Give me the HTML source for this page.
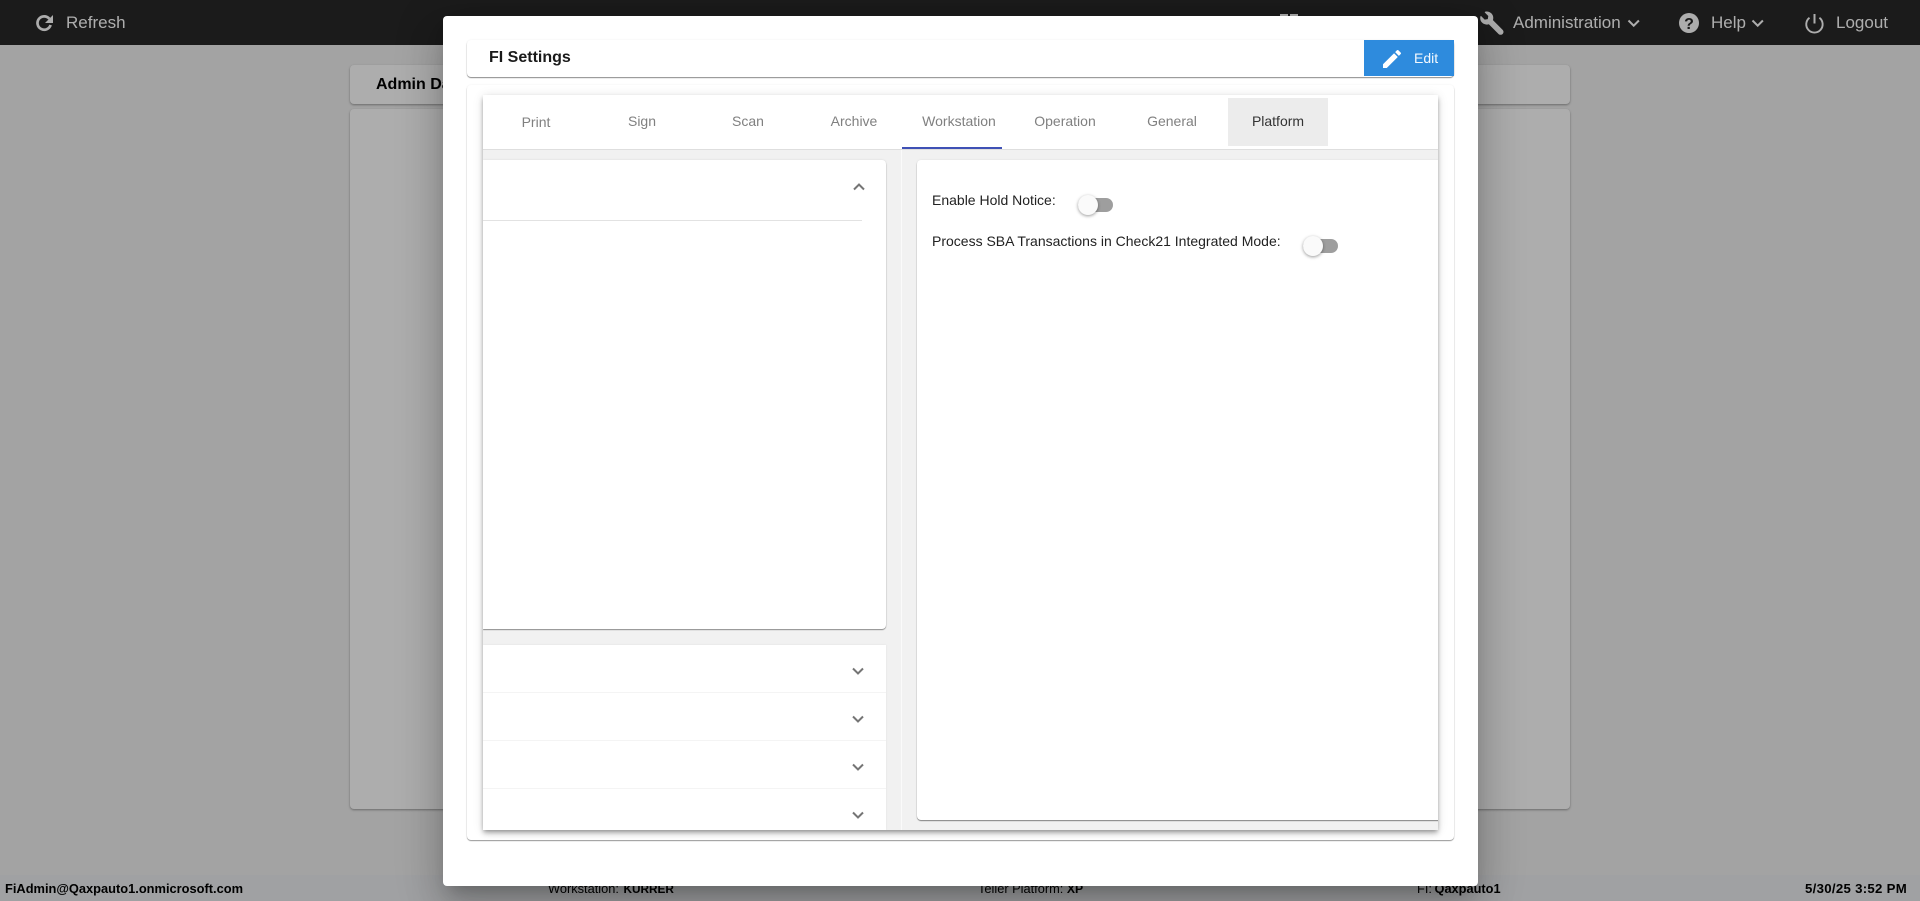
<!DOCTYPE html>
<html lang="en">
<head>
<meta charset="utf-8">
<title>FI Settings</title>
<style>
html,body{margin:0;padding:0;width:1920px;height:901px;overflow:hidden;background:#f0f0f0;font-family:"Liberation Sans",sans-serif}
div,span,svg{position:absolute;box-sizing:border-box;white-space:nowrap}
b,i{position:static}
.hdr{left:0;top:0;width:1920px;height:45px;background:#292929}
.nav{top:12px;height:21px;line-height:21px;font-size:17px;color:#fff}
.bg1{left:350px;top:65px;width:1220px;height:39px;background:#fff;border-radius:4px;box-shadow:0 1px 2px rgba(0,0,0,.35)}
.bg1 b{position:absolute;left:26px;top:11px;font-size:16px;line-height:18px;color:#000}
.bg2{left:350px;top:109px;width:1220px;height:700px;background:#fff;border-radius:4px;box-shadow:0 1px 2px rgba(0,0,0,.35)}
.ftr{left:0;top:875px;width:1920px;height:26px;background:#eceef0}
.ft{top:881px;height:16px;line-height:16px;font-size:12.8px;color:#000}
.ov{left:0;top:0;width:1920px;height:901px;background:rgba(0,0,0,.32)}
.modal{left:443px;top:16px;width:1035px;height:870px;background:#fff;border-radius:4px;box-shadow:0 11px 15px -7px rgba(0,0,0,.2),0 24px 38px 3px rgba(0,0,0,.14),0 9px 46px 8px rgba(0,0,0,.12)}
.title{left:24px;top:24px;width:987px;height:37px;background:#fff;border-radius:4px;box-shadow:0 1px 1px rgba(0,0,0,.45),0 0 2px rgba(0,0,0,.06)}
.title b{position:absolute;left:22px;top:8px;font-size:16px;line-height:19px;color:#1a1a1a}
.edit{left:897px;top:0;width:90px;height:36px;background:#2e8bdd}
.edit span{left:50px;top:10px;font-size:14px;line-height:16px;color:#f4f9fe}
.content{left:24px;top:69px;width:987px;height:755px;background:#fff;border-radius:4px;box-shadow:0 1px 1px rgba(0,0,0,.4),0 0 2px rgba(0,0,0,.06)}
.tabs{left:16px;top:10px;width:955px;height:735px;background:#f1f1f1;overflow:hidden;border-radius:2px 2px 0 0}
.tabsh{left:16px;top:10px;width:955px;height:735px;box-shadow:0 2px 4px -1px rgba(0,0,0,.3),0 4px 5px 0 rgba(0,0,0,.16),0 1px 10px 0 rgba(0,0,0,.12)}
.bar{left:0;top:0;width:955px;height:55px;background:#fff;border-bottom:1px solid #dedede}
.tab{top:18px;width:106px;text-align:center;font-size:14px;line-height:16px;color:#808080}
.left{left:0;top:65px;width:403px;height:469px;background:#fff;border-radius:0 4px 4px 0;box-shadow:0 1px 1px rgba(0,0,0,.4),0 0 2px rgba(0,0,0,.1)}
.acc{left:0;top:550px;width:403px;height:185px;background:#fff;box-shadow:0 0 2px rgba(0,0,0,.08)}
.sep{left:0;width:403px;height:1px;background:#f4f4f4}
.vline{left:418px;top:55px;width:1px;height:680px;background:#fafafa}
.right{left:434px;top:65px;width:530px;height:660px;background:#fff;border-radius:4px;box-shadow:0 1px 1px rgba(0,0,0,.45),0 0 2px rgba(0,0,0,.08)}
.lab{left:15px;font-size:14px;line-height:16px;color:#222}
.track{width:35px;height:14px;background:#9e9e9e;border-radius:7px}
.thumb{width:20px;height:20px;background:#fafafa;border-radius:50%;box-shadow:0 1px 3px rgba(0,0,0,.4)}
</style>
</head>
<body>
<div class="hdr"></div>
<div class="nav" style="left:66px">Refresh</div>
<div class="nav" style="left:1513px">Administration</div>
<div class="nav" style="left:1711px">Help</div>
<div class="nav" style="left:1836px">Logout</div>
<svg style="left:0;top:0" width="1920" height="45" viewBox="0 0 1920 45" fill="none">
  <path d="M49.3 18.7A6.7 6.7 0 1 0 50.6 25" stroke="#fff" stroke-width="2.7"/>
  <path d="M53 15v8h-8z" fill="#fff"/>
  <rect x="1280" y="14" width="8" height="3" fill="#fff"/>
  <rect x="1290" y="14" width="8" height="3" fill="#fff"/>
  <g transform="translate(1503.5 11.5) scale(-0.0455 0.0455)">
    <path fill="#fff" d="M507.73 109.1c-2.24-9.03-13.54-12.09-20.12-5.51l-74.36 74.36-67.88-11.31-11.31-67.88 74.36-74.36c6.62-6.62 3.43-17.9-5.66-20.16-47.38-11.74-99.55.91-136.58 37.93-39.64 39.64-50.55 97.1-34.05 147.2L18.74 402.76c-24.99 24.99-24.99 65.51 0 90.5 24.99 24.99 65.51 24.99 90.5 0l213.21-213.21c50.12 16.71 107.47 5.68 147.37-34.22 37.07-37.07 49.7-89.32 37.91-136.73z"/>
  </g>
  <path d="M1628.5 20.5l5.2 5.2 5.2-5.2" stroke="#fff" stroke-width="2"/>
  <circle cx="1689" cy="23" r="10" fill="#fff"/>
  <text x="1689" y="29" text-anchor="middle" font-family="Liberation Sans" font-weight="700" font-size="16" fill="#292929">?</text>
  <path d="M1752.5 20.5l5.2 5.2 5.2-5.2" stroke="#fff" stroke-width="2"/>
  <path d="M1809.5 17.8a8.2 8.2 0 1 0 9.9 0" stroke="#fff" stroke-width="1.9"/>
  <path d="M1814.5 14v9.5" stroke="#fff" stroke-width="2"/>
</svg>

<div class="bg1"><b>Admin Dashboard</b></div>
<div class="bg2"></div>

<div class="ftr"></div>
<div class="ft" style="left:5px;font-size:12.85px"><b>FiAdmin@Qaxpauto1.onmicrosoft.com</b></div>
<div class="ft" style="left:548px">Workstation: <b style="font-size:11.8px;margin-left:1px">KURRER</b></div>
<div class="ft" style="left:978px">Teller Platform: <b style="font-size:12.2px">XP</b></div>
<div class="ft" style="left:1417px">FI: <b style="margin-left:-1px">Qaxpauto1</b></div>
<div class="ft" style="left:1805px;font-size:13.2px;letter-spacing:.3px"><b>5/30/25 3:52 PM</b></div>

<div class="ov"></div>

<div class="modal">
  <div class="title">
    <b>FI Settings</b>
    <div class="edit">
      <svg style="left:16px;top:7px" width="24" height="24" viewBox="0 0 24 24"><path fill="#fff" d="M3 17.25V21h3.75L17.81 9.94l-3.75-3.75L3 17.25zM20.71 7.04c.39-.39.39-1.02 0-1.41l-2.34-2.34c-.39-.39-1.02-.39-1.41 0l-1.83 1.83 3.75 3.75 1.83-1.83z"/></svg>
      <span>Edit</span>
    </div>
  </div>
  <div class="content">
    <div class="tabsh"></div>
    <div class="tabs">
      <div class="bar">
        <div style="left:745px;top:3px;width:100px;height:48px;background:#ececec"></div>
        <div class="tab" style="left:0;top:19px">Print</div>
        <div class="tab" style="left:106px">Sign</div>
        <div class="tab" style="left:212px">Scan</div>
        <div class="tab" style="left:318px">Archive</div>
        <div class="tab" style="left:423px">Workstation</div>
        <div class="tab" style="left:529px">Operation</div>
        <div class="tab" style="left:636px">General</div>
        <div class="tab" style="left:742px;color:#333">Platform</div>
        <div style="left:419px;top:52px;width:100px;height:2px;background:#3f51b5"></div>
      </div>
      <div class="vline"></div>
      <div class="left">
        <svg style="left:369px;top:22px" width="14" height="10" viewBox="0 0 14 10" fill="none"><path d="M2 7.5L7 2.5l5 5" stroke="#757575" stroke-width="2"/></svg>
        <div style="left:0;top:60px;width:379px;height:1px;background:#e2e2e2"></div>
      </div>
      <div class="acc">
        <div class="sep" style="top:47px"></div>
        <div class="sep" style="top:95px"></div>
        <div class="sep" style="top:143px"></div>
        <svg style="left:368px;top:21px" width="14" height="10" viewBox="0 0 14 10" fill="none"><path d="M2 2.5L7 7.5l5-5" stroke="#757575" stroke-width="2"/></svg>
        <svg style="left:368px;top:69px" width="14" height="10" viewBox="0 0 14 10" fill="none"><path d="M2 2.5L7 7.5l5-5" stroke="#757575" stroke-width="2"/></svg>
        <svg style="left:368px;top:117px" width="14" height="10" viewBox="0 0 14 10" fill="none"><path d="M2 2.5L7 7.5l5-5" stroke="#757575" stroke-width="2"/></svg>
        <svg style="left:368px;top:165px" width="14" height="10" viewBox="0 0 14 10" fill="none"><path d="M2 2.5L7 7.5l5-5" stroke="#757575" stroke-width="2"/></svg>
      </div>
      <div class="right">
        <div class="lab" style="top:32px">Enable Hold Notice:</div>
        <div class="track" style="left:161px;top:38px"></div>
        <div class="thumb" style="left:161px;top:35px"></div>
        <div class="lab" style="top:73px">Process SBA Transactions in Check21 Integrated Mode:</div>
        <div class="track" style="left:386px;top:79px"></div>
        <div class="thumb" style="left:386px;top:76px"></div>
      </div>
    </div>
  </div>
</div>
</body>
</html>
